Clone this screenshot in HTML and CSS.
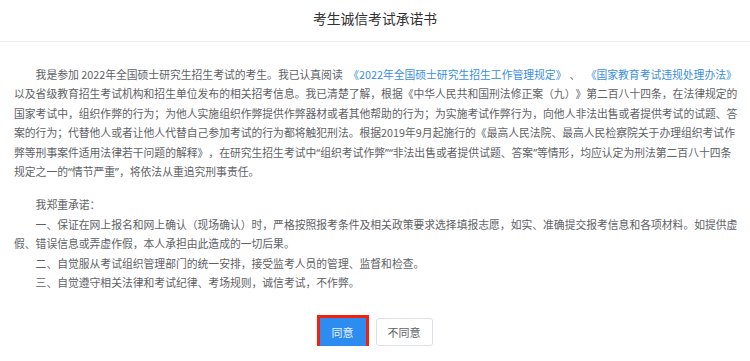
FILE: index.html
```html
<!DOCTYPE html>
<html lang="zh-CN">
<head>
    <meta charset="UTF-8">
    <meta name="viewport" content="width=device-width, initial-scale=1.0">
    <title>考生诚信考试承诺书</title>
    <link rel="stylesheet" href="styles.css">
</head>
<body>

<header class="dialog-header">
    <h1>考生诚信考试承诺书</h1>
</header>

<div class="dialog-body">
    <p class="indent">我是参加 2022年全国硕士研究生招生考试的考生。我已认真阅读 <a href="#">《2022年全国硕士研究生招生工作管理规定》</a>、 <a href="#">《国家教育考试违规处理办法》</a>以及省级教育招生考试机构和招生单位发布的相关招考信息。我已清楚了解，根据《中华人民共和国刑法修正案（九）》第二百八十四条，在法律规定的国家考试中，组织作弊的行为；为他人实施组织作弊提供作弊器材或者其他帮助的行为；为实施考试作弊行为，向他人非法出售或者提供考试的试题、答案的行为；代替他人或者让他人代替自己参加考试的行为都将触犯刑法。根据2019年9月起施行的《最高人民法院、最高人民检察院关于办理组织考试作弊等刑事案件适用法律若干问题的解释》，在研究生招生考试中<q>组织考试作弊</q><q>非法出售或者提供试题、答案</q>等情形，均应认定为刑法第二百八十四条规定之一的<q>情节严重</q>，将依法从重追究刑事责任。</p>

    <div class="promise">
        <p class="indent">我郑重承诺：</p>
        <p class="indent">一、保证在网上报名和网上确认（现场确认）时，严格按照报考条件及相关政策要求选择填报志愿，如实、准确提交报考信息和各项材料。如提供虚假、错误信息或弄虚作假，本人承担由此造成的一切后果。</p>
        <p class="indent">二、自觉服从考试组织管理部门的统一安排，接受监考人员的管理、监督和检查。</p>
        <p class="indent">三、自觉遵守相关法律和考试纪律、考场规则，诚信考试，不作弊。</p>
    </div>
</div>

<div class="dialog-footer">
    <button class="btn btn-primary">同意</button>
    <button class="btn">不同意</button>
</div>

</body>
</html>
```

FILE: styles.css
```css
body {
    font-family: "Noto Sans CJK SC", "Noto Sans", sans-serif;
    background-color: #fff;
    color: #606266;
    margin: 0;
    padding: 0;
}

.dialog-header {
    padding: 8px 0 13px;
    border-bottom: 1px solid #ebeef5;
    text-align: center;
}

.dialog-header h1 {
    font-size: 13.8px;
    font-weight: normal;
    line-height: 20px;
    color: #303133;
    margin: 0;
}

.dialog-body {
    padding: 23px 8px 0 14px;
    font-size: 10.8px;
    line-height: 19.4px;
    text-spacing-trim: space-all;
}

.dialog-body p {
    margin: 0;
}

.indent {
    text-indent: 2em;
}

.dialog-body a {
    color: #3a8ee6;
    text-decoration: none;
    padding: 0 3px;
}

/* 引号用窄字形，和原页面一致 */
.dialog-body q {
    quotes: "\201C" "\201D";
}

.dialog-body q::before,
.dialog-body q::after {
    font-family: "Noto Sans", sans-serif;
}

.promise {
    margin-top: 14px;
}

.dialog-footer {
    display: flex;
    justify-content: center;
    gap: 10px;
    margin-top: 26px;
    padding-left: 2px;
}

.btn {
    font-family: inherit;
    font-size: 11px;
    height: 28px;
    padding: 0 11px;
    border: 1px solid #dcdfe6;
    border-radius: 3px;
    background-color: #fff;
    color: #606266;
    cursor: pointer;
}

.btn-primary {
    background-color: #2d8cf0;
    border-color: #2d8cf0;
    color: #eaf3fd;
    border-radius: 0;
    outline: 3px solid #f2200c;
}
```
